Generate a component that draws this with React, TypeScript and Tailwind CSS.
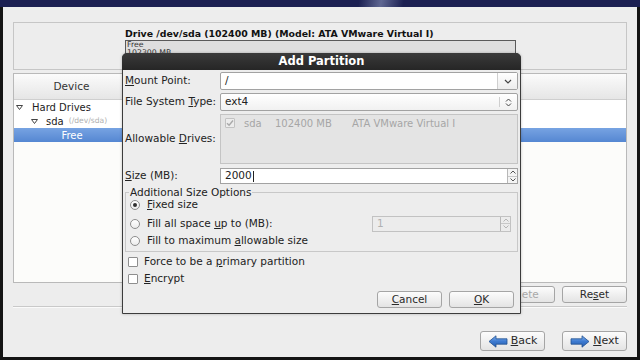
import React from 'react';

// mnemonic letter, GTK style
function U({ c }: { c: string }) {
  return <span className="underline decoration-1 underline-offset-[1px]">{c}</span>;
}

function Btn({ children, className = '', disabled = false }: { children: React.ReactNode; className?: string; disabled?: boolean }) {
  return (
    <div
      className={
        'flex items-center justify-center rounded-[3px] border border-[#a5a5a5] bg-linear-to-b from-[#fcfcfc] to-[#e4e4e4] text-[10.5px] ' +
        (disabled ? 'text-[#a8a8a8] ' : 'text-[#2a2a2a] ') +
        className
      }
    >
      {children}
    </div>
  );
}

function Check({ disabled = false, checked = false }: { disabled?: boolean; checked?: boolean }) {
  return (
    <div
      className={
        'flex h-[10px] w-[10px] shrink-0 items-center justify-center rounded-[1px] border ' +
        (disabled ? 'border-[#c2c2c2] bg-[#ececec]' : 'border-[#8e8e8e] bg-white')
      }
    >
      {checked && (
        <svg width="8" height="8" viewBox="0 0 8 8">
          <path d="M1 4.2 L3.1 6.3 L7 1.5" fill="none" stroke={disabled ? '#a9a9a9' : '#333'} strokeWidth="1.4" />
        </svg>
      )}
    </div>
  );
}

function Radio({ on = false }: { on?: boolean }) {
  return (
    <div className="flex h-[10px] w-[10px] shrink-0 items-center justify-center rounded-full border border-[#8e8e8e] bg-linear-to-b from-white to-[#ececec]">
      {on && <div className="h-[4px] w-[4px] rounded-full bg-[#303030]" />}
    </div>
  );
}

function Spin({ disabled = false }: { disabled?: boolean }) {
  const c = disabled ? '#b5b5b5' : '#555';
  return (
    <div className={'flex w-[10px] flex-col border-l border-[#b8b8b8] ' + (disabled ? 'bg-[#ececec]' : 'bg-[#f4f4f4]')}>
      <div className="flex flex-1 items-center justify-center border-b border-[#c8c8c8]">
        <svg width="6" height="4" viewBox="0 0 6 4">
          <path d="M0.5 3.5 L3 1 L5.5 3.5" fill="none" stroke={c} strokeWidth="1" />
        </svg>
      </div>
      <div className="flex flex-1 items-center justify-center">
        <svg width="6" height="4" viewBox="0 0 6 4">
          <path d="M0.5 0.5 L3 3 L5.5 0.5" fill="none" stroke={c} strokeWidth="1" />
        </svg>
      </div>
    </div>
  );
}

function Arrow({ dir }: { dir: 'left' | 'right' }) {
  const d = dir === 'left' ? 'M1 6.5 L8 0.8 L8 3.8 L19 3.8 L19 9.2 L8 9.2 L8 12.2 Z' : 'M19 6.5 L12 0.8 L12 3.8 L1 3.8 L1 9.2 L12 9.2 L12 12.2 Z';
  return (
    <svg width="20" height="13" viewBox="0 0 20 13">
      <defs>
        <linearGradient id={'ar' + dir} x1="0" y1="0" x2="0" y2="1">
          <stop offset="0" stopColor="#7fb0ee" />
          <stop offset="0.5" stopColor="#3d7ad0" />
          <stop offset="1" stopColor="#2a5fb0" />
        </linearGradient>
      </defs>
      <path d={d} fill={'url(#ar' + dir + ')'} stroke="#22508f" strokeWidth="0.8" strokeLinejoin="round" />
    </svg>
  );
}

function Tri() {
  return (
    <svg width="7" height="5" viewBox="0 0 7 5">
      <path d="M0.5 0.5 L6.5 0.5 L3.5 4.5 Z" fill="none" stroke="#444" strokeWidth="1" strokeLinejoin="round" />
    </svg>
  );
}

export default function App() {
  return (
    <div className="relative h-[360px] w-[640px] overflow-hidden bg-[#ededed] font-['DejaVu_Sans',sans-serif] text-[#222]">
      {/* banner strip */}
      <div className="h-[7px] bg-[linear-gradient(100deg,#1c2052_0%,#1c2052_56%,#5f6792_59.5%,#1c2052_63%,#1c2052_100%)]" />

      <div className="flex h-[350px]">
        <div className="w-[3px] bg-[#141414]" />
        <div className="flex flex-1 flex-col px-[10px] pt-[15px]">
          {/* drive box */}
          <div className="h-[48px] border border-[#c6c6c6] pl-[111px] pt-[5px]">
            <div className="text-[9.4px] font-bold leading-[11px] text-[#111]">Drive /dev/sda (102400 MB) (Model: ATA VMware Virtual I)</div>
            <div className="mt-[1px] h-[17px] w-[391px] overflow-hidden border border-[#5a5a5a] bg-[#dedede] pl-[1px] text-[7.8px] leading-[8px] text-[#333]">
              <div>Free</div>
              <div>102300 MB</div>
            </div>
          </div>

          {/* device tree */}
          <div className="mt-[3px] flex h-[210px] flex-col border border-[#b9b9b9] bg-[#fcfcfa]">
            <div className="flex h-[26px] border-b border-[#cfcfcf] bg-linear-to-b from-[#fbfbfb] to-[#e6e6e6]">
              <div className="flex w-[116px] items-center justify-center border-r border-[#d0d0d0] text-[10.5px] text-[#333]">Device</div>
              <div className="flex-1" />
            </div>
            <div className="bg-white">
              <div className="flex h-[14px] items-center pl-[2px] text-[10px]">
                <Tri />
                <span className="ml-[9px]">Hard Drives</span>
              </div>
              <div className="flex h-[14px] items-center pl-[17px] text-[10px]">
                <Tri />
                <span className="ml-[8px]">sda</span>
                <span className="ml-[5px] text-[7.6px] text-[#b0b0b0]">(/dev/sda)</span>
              </div>
            </div>
            <div className="flex h-[14px] items-center bg-linear-to-b from-[#77a3e2] to-[#5587d2] text-[10px] text-white">
              <div className="w-[116px] text-center">Free</div>
            </div>
          </div>

          <div className="mt-[3px] flex h-[17px] justify-end gap-[7px]">
            <Btn disabled className="w-[67px]">
              <U c="D" />
              elete
            </Btn>
            <Btn className="w-[65px]">
              Re<U c="s" />
              et
            </Btn>
          </div>

          <div className="mt-[3px] h-px bg-[#c9c9c9]" />
          <div className="h-px bg-[#fafafa]" />

          <div className="mt-[23px] flex h-[20px] justify-end gap-[17px]">
            <Btn className="w-[65px] gap-[3px] text-[11px]">
              <Arrow dir="left" />
              <span>
                <U c="B" />
                ack
              </span>
            </Btn>
            <Btn className="w-[65px] gap-[3px] text-[11px]">
              <Arrow dir="right" />
              <span>
                <U c="N" />
                ext
              </span>
            </Btn>
          </div>
        </div>
        <div className="w-[3px] bg-[#141414]" />
      </div>
      <div className="h-[3px] bg-[#141414]" />

      {/* Add Partition dialog */}
      <div className="absolute left-[122px] top-[53px] w-[399px] rounded-t-[5px] border border-[#3c3c3c] bg-[#ededed] shadow-[0_0_3px_rgba(0,0,0,0.25)]">
        <div className="-mx-px -mt-px flex h-[17px] items-center justify-center rounded-t-[5px] bg-linear-to-b from-[#3a3a3a] to-[#262626] text-[11.5px] font-bold text-white">
          Add Partition
        </div>

        <div className="px-[2px] text-[10.5px]">
          <div className="mt-[2px] flex h-[18px] items-center">
            <div className="w-[95px]">
              <U c="M" />
              ount Point:
            </div>
            <div className="flex h-full flex-1 rounded-[2px] border border-[#a2a2a2] bg-white">
              <div className="flex flex-1 items-center pl-[4px]">/</div>
              <div className="flex w-[20px] items-center justify-center border-l border-[#cfcfcf] bg-linear-to-b from-white to-[#ededed]">
                <svg width="8" height="5" viewBox="0 0 8 5">
                  <path d="M1 1 L4 4 L7 1" fill="none" stroke="#444" strokeWidth="1.2" />
                </svg>
              </div>
            </div>
          </div>

          <div className="mt-[3px] flex h-[18px] items-center">
            <div className="w-[95px]">
              File System <U c="T" />
              ype:
            </div>
            <div className="flex h-full flex-1 rounded-[2px] border border-[#a2a2a2] bg-linear-to-b from-white to-[#f1f1f1]">
              <div className="flex flex-1 items-center pl-[4px]">ext4</div>
              <div className="my-[3px] border-l border-[#cfcfcf]" />
              <div className="flex w-[17px] items-center justify-center">
                <svg width="7" height="9" viewBox="0 0 7 9">
                  <path d="M1 3.5 L3.5 1 L6 3.5 M1 5.5 L3.5 8 L6 5.5" fill="none" stroke="#444" strokeWidth="1" />
                </svg>
              </div>
            </div>
          </div>

          <div className="mt-[3px] flex h-[50px] items-center">
            <div className="w-[95px]">
              Allowable <U c="D" />
              rives:
            </div>
            <div className="h-full flex-1 border border-[#c4c4c4] bg-[#e4e4e4] pl-[4px] pt-[3px] text-[10px] text-[#a6a6a6]">
              <div className="flex h-[10px] items-center">
                <Check disabled checked />
                <span className="ml-[9px] w-[31px]">sda</span>
                <span className="w-[77px]">102400 MB</span>
                <span>ATA VMware Virtual I</span>
              </div>
            </div>
          </div>

          <div className="mt-[4px] flex h-[16px] items-center">
            <div className="w-[95px]">
              <U c="S" />
              ize (MB):
            </div>
            <div className="flex h-full flex-1 border border-[#a2a2a2] bg-white">
              <div className="flex flex-1 items-center pl-[4px]">
                2000<span className="ml-px h-[11px] w-px bg-[#222]" />
              </div>
              <Spin />
            </div>
          </div>

          <fieldset className="mt-[2px] border border-[#c8c8c8] pb-[3px] pl-[4px] pr-[6px]">
            <legend className="ml-[-1px] px-[1px] leading-[12px]">Additional Size Options</legend>
            <div className="flex h-[14px] items-center gap-[7px]">
              <Radio on />
              <span>
                <U c="F" />
                ixed size
              </span>
            </div>
            <div className="mt-[3px] flex h-[17px] items-center gap-[7px]">
              <Radio />
              <span>
                Fill all space <U c="u" />p to (MB):
              </span>
              <div className="ml-auto flex h-[16px] w-[139px] border border-[#c2c2c2] bg-[#ececec]">
                <div className="flex flex-1 items-center pl-[4px] text-[#b0b0b0]">1</div>
                <Spin disabled />
              </div>
            </div>
            <div className="mt-[2px] flex h-[14px] items-center gap-[7px]">
              <Radio />
              <span>
                Fill to maximum <U c="a" />llowable size
              </span>
            </div>
          </fieldset>

          <div className="mt-[3px] flex h-[14px] items-center gap-[6px] pl-[3px]">
            <Check />
            <span>
              Force to be a <U c="p" />rimary partition
            </span>
          </div>
          <div className="mt-[3px] flex h-[14px] items-center gap-[6px] pl-[3px]">
            <Check />
            <span>
              <U c="E" />
              ncrypt
            </span>
          </div>

          <div className="mb-[5px] mr-[4px] mt-[5px] flex h-[17px] justify-end gap-[7px]">
            <Btn className="w-[65px]">
              <U c="C" />
              ancel
            </Btn>
            <Btn className="w-[65px]">
              <U c="O" />K
            </Btn>
          </div>
        </div>
      </div>
    </div>
  );
}
